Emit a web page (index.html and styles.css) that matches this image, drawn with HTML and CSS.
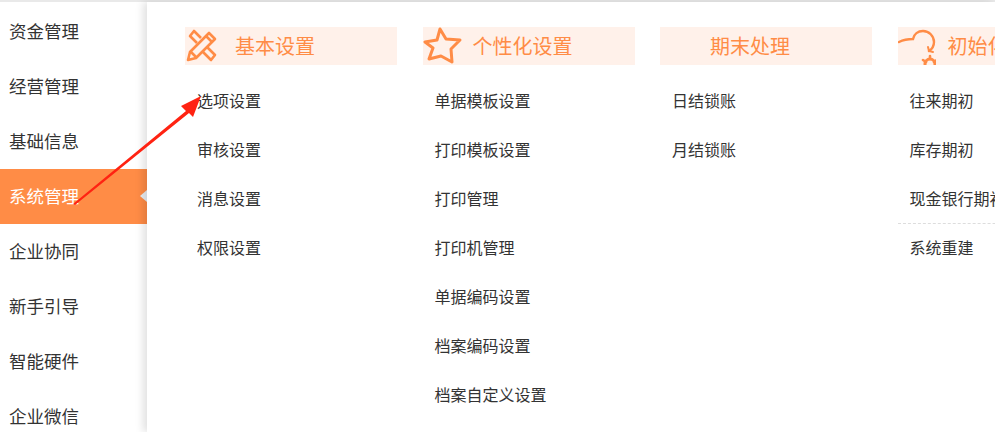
FILE: index.html
```html
<!DOCTYPE html>
<html lang="zh-CN">
<head>
  <meta charset="UTF-8">
  <title>系统管理</title>
  <link rel="stylesheet" href="styles.css">
</head>
<body>

<div class="topline"></div>

<div class="page">
  <ul class="side-nav">
    <li>资金管理</li>
    <li>经营管理</li>
    <li>基础信息</li>
    <li class="active">系统管理</li>
    <li>企业协同</li>
    <li>新手引导</li>
    <li>智能硬件</li>
    <li>企业微信</li>
  </ul>

  <div class="panel">
    <div class="menu-col">
      <div class="menu-title">
        <svg class="title-icon" viewBox="0 0 36 36" fill="none" stroke="#ff8c46" stroke-width="2.6" stroke-linejoin="round">
          <path d="M3 32l2-8L24 5l6 6-19 19z"/>
          <path d="M21 8l6 6M6 24l5 5"/>
          <path d="M12 15L5 8l4-5 7 7M22 19l8 8-4 5-8-8"/>
        </svg>
        <span>基本设置</span>
      </div>
      <ul class="menu-list">
        <li>选项设置</li>
        <li>审核设置</li>
        <li>消息设置</li>
        <li>权限设置</li>
      </ul>
    </div>

    <div class="menu-col">
      <div class="menu-title">
        <svg class="title-icon star" viewBox="0 0 40 40" fill="none" stroke="#ff8c46" stroke-width="3" stroke-linejoin="round">
          <path d="M17 3l6 10 14 1-9 9 1 13-11-6-12 3 4-11-8-6 12-2z"/>
        </svg>
        <span>个性化设置</span>
      </div>
      <ul class="menu-list">
        <li>单据模板设置</li>
        <li>打印模板设置</li>
        <li>打印管理</li>
        <li>打印机管理</li>
        <li>单据编码设置</li>
        <li>档案编码设置</li>
        <li>档案自定义设置</li>
      </ul>
    </div>

    <div class="menu-col">
      <div class="menu-title">
        <span class="title-icon"></span>
        <span>期末处理</span>
      </div>
      <ul class="menu-list">
        <li>日结锁账</li>
        <li>月结锁账</li>
      </ul>
    </div>

    <div class="menu-col">
      <div class="menu-title">
        <svg class="title-icon cloud" viewBox="0 0 38 38" fill="none" stroke="#ff8c46" stroke-width="2.4" stroke-linecap="round">
          <path d="M1 15c4-2 8-3 14-3 1-5 5-8 10-8 6 0 11 5 11 11 0 4-2 7-5 9"/>
          <path d="M30 20l1 4 4 1" stroke-width="2"/>
          <circle cx="32" cy="37" r="5" stroke-width="3"/>
          <path d="M32 29v3M25 33l3 2M39 33l-3 2" stroke-width="2.6"/>
        </svg>
        <span>初始化</span>
      </div>
      <ul class="menu-list">
        <li>往来期初</li>
        <li>库存期初</li>
        <li class="divided">现金银行期初</li>
        <li>系统重建</li>
      </ul>
    </div>
  </div>
</div>

<svg class="arrow" viewBox="0 0 995 432">
  <path fill="#ff2312" d="M73 204L186 111 181 106 201 96 193 117 189 113 75 205z"/>
</svg>

</body>
</html>
```

FILE: styles.css
```css
html, body {
  margin: 0;
  padding: 0;
  height: 100%;
  overflow: hidden;
  background: white;
  font-family: "Microsoft YaHei", "Noto Sans CJK SC", sans-serif;
}

ul {
  list-style: none;
  margin: 0;
  padding: 0;
}

.topline {
  height: 2px;
  background: #e9e9e9;
}

.page {
  display: flex;
  height: 430px;
}

.side-nav {
  width: 147px;
  flex-shrink: 0;
  margin-top: 2px;
}

.side-nav li {
  position: relative;
  height: 55px;
  line-height: 53px;
  padding-left: 9px;
  font-size: 17.5px;
  color: #333;
}

.side-nav li.active {
  background: #ff8c46;
  color: white;
}

.side-nav li.active::after {
  content: "";
  position: absolute;
  right: 0;
  top: 21px;
  border: 6px solid transparent;
  border-right: 7px solid #e8edf2;
  border-left: 0;
}

.panel {
  flex: 1;
  display: flex;
  gap: 25.5px;
  padding: 25px 0 0 38px;
  min-width: 0;
  overflow: hidden;
  box-shadow: -4px 0 8px rgba(0,0,0,0.12);
  position: relative;
}

.menu-col {
  width: 212px;
  flex-shrink: 0;
}

.menu-title {
  display: flex;
  align-items: center;
  height: 38px;
  background: #fff1ea;
  color: #ff8c46;
  font-size: 20px;
  line-height: 36px;
  overflow: hidden;
}

.title-icon {
  width: 36px;
  height: 36px;
  margin-right: 14px;
  flex-shrink: 0;
}

.title-icon.star {
  width: 40px;
  height: 40px;
  margin-right: 10px;
}

.title-icon.cloud {
  width: 38px;
  height: 38px;
  margin-right: 12px;
}

.menu-list {
  margin-top: 12px;
}

.menu-list li {
  height: 49px;
  line-height: 47px;
  padding-left: 12px;
  font-size: 16px;
  color: #333;
  white-space: nowrap;
}

.menu-list li.divided {
  border-bottom: 1px dashed #ddd;
  height: 48px;
}

.arrow {
  position: absolute;
  left: 0;
  top: 0;
  width: 995px;
  height: 432px;
  pointer-events: none;
}
```
